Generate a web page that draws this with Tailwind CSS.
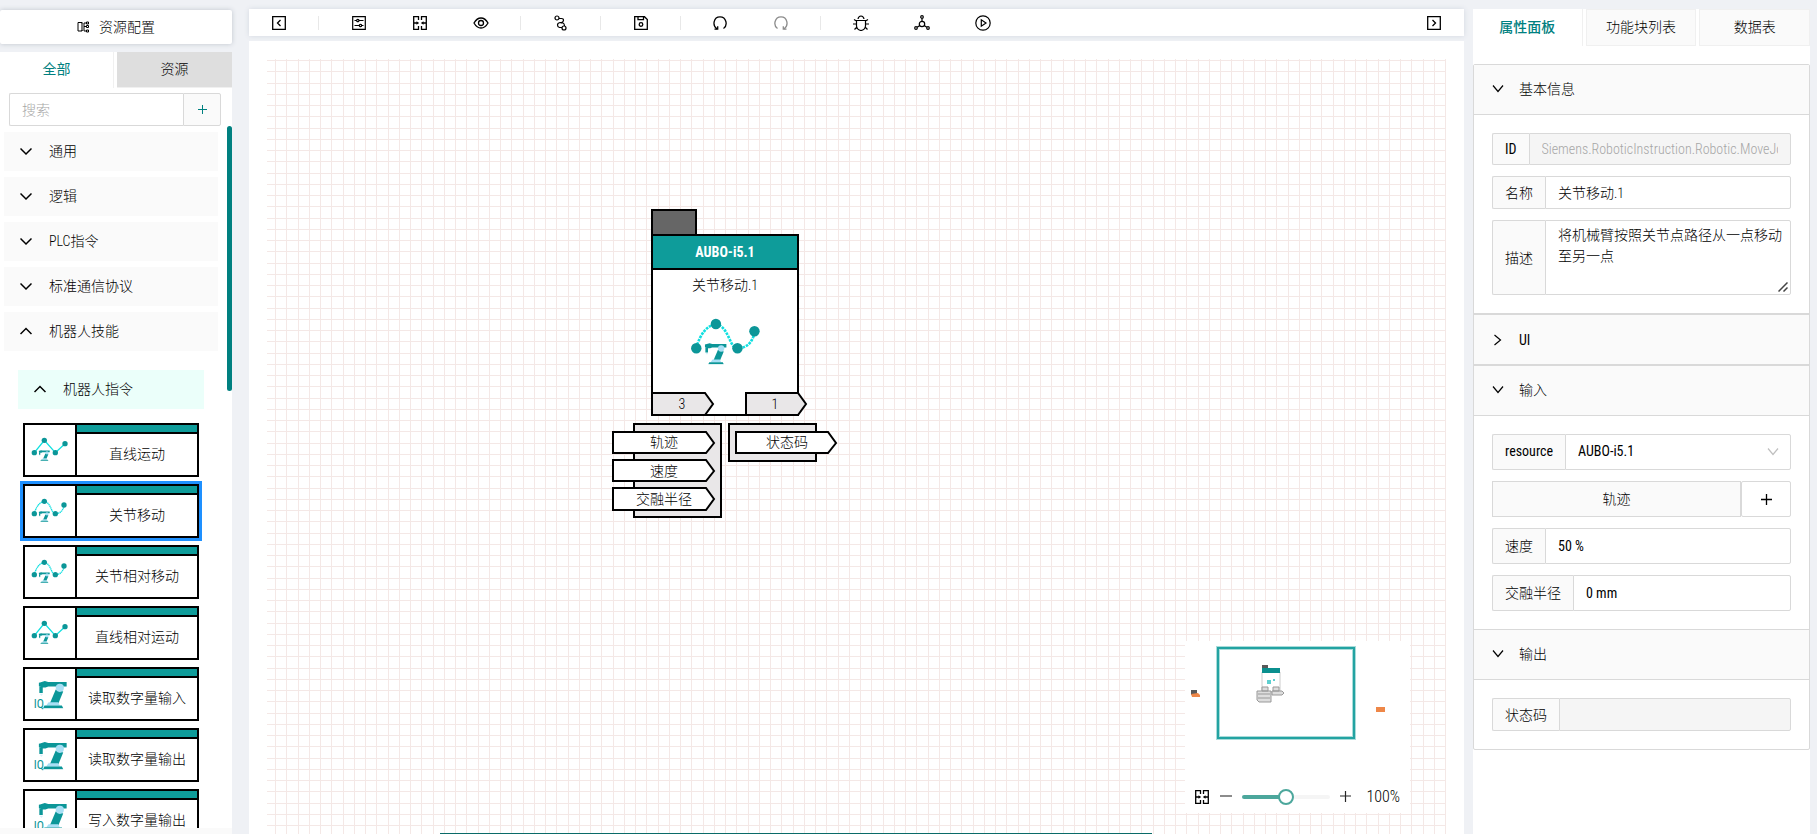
<!DOCTYPE html>
<html lang="zh-CN">

<head>
    <meta charset="UTF-8">
    <meta name="viewport" content="width=device-width, initial-scale=1.0">
    <script src="https://cdn.jsdelivr.net/npm/@tailwindcss/browser@4"></script>
    <title>资源配置</title>
</head>

<body class="bg-[#eff1f5] font-['Roboto_Condensed',Roboto,'Noto_Sans_CJK_SC',sans-serif] text-sm font-light text-black">
    <!-- Shared icons -->
    <svg class="hidden">
        <symbol id="down" viewBox="0 0 12 12"><path d="M1 2.500l5 6 5-6" fill="none" stroke="currentColor" stroke-width="1.200"/></symbol>
        <symbol id="fold" viewBox="0 0 12 12"><path d="M0.5 3.5L6 9l5.500-5.500" fill="none" stroke="currentColor" stroke-width="1.5"/></symbol>
        <symbol id="unfold" viewBox="0 0 12 12"><path d="M0.500 9L6 3.500 11.500 9" fill="none" stroke="currentColor" stroke-width="1.5"/></symbol>
        <symbol id="fit" viewBox="0 0 14 14">
            <path d="M5.500 4V.7H.7v12.600h4.800V10M8.500 4V.7h4.800v12.600H8.500V10M1 7h3M10 7h3" fill="none" stroke="currentColor" stroke-width="1.300"/>
            <path d="M3.500 5.200L6.200 7 3.500 8.800zM10.500 5.200L7.800 7l2.700 1.800z" fill="currentColor"/>
        </symbol>
        <symbol id="robot" viewBox="0 0 84 82">
            <path d="M4 5l14-4 10 3h54v13H28l-8 3H6v-4H0V6z" fill="#0b9698"/>
            <path d="M2 16h10v20H2z" fill="#0b9698"/>
            <path d="M3 38l10 0-5 7z" fill="#d5eefb"/>
            <path d="M50 26l22 6-14 34H33z" fill="#0b9698"/>
            <circle cx="62" cy="21" r="12" fill="#a8dff5"/>
            <path d="M29 63h28l5 10H22z" fill="#a8dff5"/>
            <path d="M17 73h51l4 8H13z" fill="#0b9698"/>
        </symbol>
        <symbol id="line-move" viewBox="0 0 150 150">
            <path d="M28 83L58 46l33 37 29-27" fill="none" stroke="#10e0df" stroke-width="4"/>
            <g fill="#0b9698"><circle cx="28" cy="83" r="8"/><circle cx="58" cy="46" r="8"/><circle cx="91" cy="83" r="8"/><circle cx="120" cy="56" r="8"/></g>
            <use href="#robot" x="41" y="75" width="34" height="33"/>
        </symbol>
        <symbol id="joint-move" viewBox="0 0 150 150">
            <path d="M28 83c6-24 18-35 30-37 20 3 22 40 33 37 17 0 24-12 27-27" fill="none" stroke="#10dfe0" stroke-width="4" stroke-dasharray="4 1.500"/>
            <g fill="#0b9698"><circle cx="28" cy="83" r="8"/><circle cx="58" cy="46" r="8"/><circle cx="91" cy="83" r="8"/><circle cx="117" cy="57" r="8"/></g>
            <use href="#robot" x="41" y="75" width="34" height="33"/>
        </symbol>
        <symbol id="io" viewBox="0 0 150 150">
            <use href="#robot" x="41" y="35" width="86" height="84"/>
            <text x="26" y="117" font-size="36" font-weight="400" fill="#0b9698">IQ</text>
        </symbol>
    </svg>

    <div class="flex h-screen overflow-hidden">
        <!-- Resource panel Start -->
        <aside class="flex w-[232px] shrink-0 flex-col pt-[10px]">
            <h1 class="mb-2 flex h-[34px] shrink-0 items-center justify-center gap-2.5 rounded-xs bg-white shadow-[0_0_5px_#bfc4cc]">
                <svg class="size-3" viewBox="0 0 12 12" fill="none" stroke="currentColor" stroke-width="1">
                    <path d="M5 2.500V1.500H1v8.500h4V9M5 1.500V10M7 2v8M7 5.500h3M7 2h2M7 10h2"/><path d="M9.500 1h2v2h-2zM9.500 4.500h2v2h-2zM9.500 9h2v2h-2z"/>
                </svg>资源配置
            </h1>
            <div class="flex min-h-0 flex-1 flex-col bg-white">
                <div class="flex h-9 shrink-0 gap-[3px]">
                    <button class="w-[114px] border-r border-[#f0f0f0] pb-0.5 font-normal text-[#008080]">全部</button>
                    <button class="flex-1 border-b border-[#f0f0f0] bg-[#dedede] pb-0.5">资源</button>
                </div>
                <div class="mt-[5px] mr-[11px] ml-[9px] flex h-[33px] shrink-0">
                    <input aria-label="搜索" placeholder="搜索" class="min-w-0 flex-1 rounded-l-xs border border-r-0 border-[#d9d9d9] px-3 outline-none placeholder:text-[#a6a6a6]">
                    <button aria-label="添加" class="flex w-[38px] items-center justify-center rounded-r-xs border border-[#d9d9d9] bg-[#fafafa] text-[#008080]">
                        <svg class="size-[9px]" viewBox="0 0 9 9"><path d="M0 4.500h9M4.500 0v9" stroke="currentColor"/></svg>
                    </button>
                </div>
                <div class="relative min-h-0 flex-1 overflow-hidden">
                    <div class="absolute top-0 right-0 h-[265px] w-[5px] rounded-full bg-[#008080]"></div>
                    <div class="mt-1.5 mr-[14px] ml-1 flex flex-col gap-1.5">
                        <button class="flex h-[39px] items-center gap-[17px] bg-[#fafafa] pb-0.5 pl-4"><svg class="size-3"><use href="#fold"/></svg>通用</button>
                        <button class="flex h-[39px] items-center gap-[17px] bg-[#fafafa] pb-0.5 pl-4"><svg class="size-3"><use href="#fold"/></svg>逻辑</button>
                        <button class="flex h-[39px] items-center gap-[17px] bg-[#fafafa] pb-0.5 pl-4"><svg class="size-3"><use href="#fold"/></svg>PLC指令</button>
                        <button class="flex h-[39px] items-center gap-[17px] bg-[#fafafa] pb-0.5 pl-4"><svg class="size-3"><use href="#fold"/></svg>标准通信协议</button>
                        <button class="flex h-[39px] items-center gap-[17px] bg-[#fafafa] pb-0.5 pl-4"><svg class="size-3"><use href="#unfold"/></svg>机器人技能</button>
                    </div>
                    <div class="mt-[19px] mr-7 ml-[18px]">
                        <button class="flex h-[39px] w-full items-center gap-[17px] bg-[#ebfffa] pb-0.5 pl-4"><svg class="size-3"><use href="#unfold"/></svg>机器人指令</button>
                    </div>
                    <ul class="mt-[14px] ml-[23px] flex w-44 flex-col gap-[7px]">
                        <li class="flex h-[54px] border-2 border-black bg-white">
                            <svg class="size-[50px]"><use href="#line-move"/></svg>
                            <div class="flex flex-1 flex-col border-l-2 border-black">
                                <div class="h-[9px] border-b-2 border-black bg-[#0e9c9a]"></div>
                                <span class="flex flex-1 items-center justify-center pb-0.5">直线运动</span>
                            </div>
                        </li>
                        <li class="flex h-[54px] border-2 border-black bg-white outline-3 outline-[#1e90ff]">
                            <svg class="size-[50px]"><use href="#joint-move"/></svg>
                            <div class="flex flex-1 flex-col border-l-2 border-black">
                                <div class="h-[9px] border-b-2 border-black bg-[#0e9c9a]"></div>
                                <span class="flex flex-1 items-center justify-center pb-0.5">关节移动</span>
                            </div>
                        </li>
                        <li class="flex h-[54px] border-2 border-black bg-white">
                            <svg class="size-[50px]"><use href="#joint-move"/></svg>
                            <div class="flex flex-1 flex-col border-l-2 border-black">
                                <div class="h-[9px] border-b-2 border-black bg-[#0e9c9a]"></div>
                                <span class="flex flex-1 items-center justify-center pb-0.5">关节相对移动</span>
                            </div>
                        </li>
                        <li class="flex h-[54px] border-2 border-black bg-white">
                            <svg class="size-[50px]"><use href="#line-move"/></svg>
                            <div class="flex flex-1 flex-col border-l-2 border-black">
                                <div class="h-[9px] border-b-2 border-black bg-[#0e9c9a]"></div>
                                <span class="flex flex-1 items-center justify-center pb-0.5">直线相对运动</span>
                            </div>
                        </li>
                        <li class="flex h-[54px] border-2 border-black bg-white">
                            <svg class="size-[50px]"><use href="#io"/></svg>
                            <div class="flex flex-1 flex-col border-l-2 border-black">
                                <div class="h-[9px] border-b-2 border-black bg-[#0e9c9a]"></div>
                                <span class="flex flex-1 items-center justify-center pb-0.5">读取数字量输入</span>
                            </div>
                        </li>
                        <li class="flex h-[54px] border-2 border-black bg-white">
                            <svg class="size-[50px]"><use href="#io"/></svg>
                            <div class="flex flex-1 flex-col border-l-2 border-black">
                                <div class="h-[9px] border-b-2 border-black bg-[#0e9c9a]"></div>
                                <span class="flex flex-1 items-center justify-center pb-0.5">读取数字量输出</span>
                            </div>
                        </li>
                        <li class="flex h-[54px] border-2 border-black bg-white">
                            <svg class="size-[50px]"><use href="#io"/></svg>
                            <div class="flex flex-1 flex-col border-l-2 border-black">
                                <div class="h-[9px] border-b-2 border-black bg-[#0e9c9a]"></div>
                                <span class="flex flex-1 items-center justify-center pb-0.5">写入数字量输出</span>
                            </div>
                        </li>
                    </ul>
                </div>
                <div class="h-1.5 shrink-0 bg-[#fafafa]"></div>
            </div>
        </aside>
        <!-- Resource panel End -->

        <!-- Main Start -->
        <main class="ml-[17px] flex min-w-0 flex-1 flex-col pt-[9px]">
            <nav class="mb-[5px] flex h-[27px] shrink-0 items-center bg-white shadow-[0_0_5px_#d3d8e0]">
                <button aria-label="收起左侧" class="flex w-[60px] justify-center">
                    <svg class="size-[14px]" viewBox="0 0 14 14" fill="none" stroke="currentColor" stroke-width="1.3"><path d="M.7.7h12.600v12.600H.7zM8.500 4L5.500 7l3 3"/></svg>
                </button>
                <div class="mx-[9px] h-[14px] w-px bg-[#e8e8e8]"></div>
                <button aria-label="设置" class="flex w-[61px] justify-center">
                    <svg class="size-[14px]" viewBox="0 0 14 14" fill="none" stroke="currentColor" stroke-width="1.2"><path d="M.7.7h12.600v12.600H.7zM2.500 4.500h2M7 4.500h4.500M2.500 9.500H7M10 9.500h1.500"/><circle cx="5.800" cy="4.500" r="1.200"/><circle cx="8.500" cy="9.500" r="1.200"/></svg>
                </button>
                <button aria-label="适应画布" class="flex w-[61px] justify-center"><svg class="size-[14px]"><use href="#fit"/></svg></button>
                <button aria-label="预览" class="flex w-[61px] justify-center">
                    <svg class="size-4" viewBox="0 0 16 16" fill="none" stroke="currentColor" stroke-width="1.3"><path d="M1 8c2-3.500 4.500-5 7-5s5 1.500 7 5c-2 3.500-4.500 5-7 5s-5-1.500-7-5z"/><circle cx="8" cy="8" r="2.500"/></svg>
                </button>
                <div class="mx-[9px] h-[14px] w-px bg-[#e8e8e8]"></div>
                <button aria-label="连线" class="flex w-[61px] justify-center">
                    <svg class="size-4" viewBox="0 0 16 16" fill="none" stroke="currentColor" stroke-width="1.200"><circle cx="4" cy="3" r="2"/><circle cx="11" cy="13" r="2"/><path d="M6 3.500h2.500q2 0 2 1.800T8.500 7.500H7Q4.500 8 4.500 10t2 2.500H9M7.500 8H10q1.500.5 1.500 3"/></svg>
                </button>
                <div class="mx-[9px] h-[14px] w-px bg-[#e8e8e8]"></div>
                <button aria-label="保存" class="flex w-[61px] justify-center">
                    <svg class="size-[14px]" viewBox="0 0 14 14" fill="none" stroke="currentColor" stroke-width="1.300"><path d="M.7.7h9.800l2.800 2.800v9.800H.7zM4 .7v3h5.500v-3"/><circle cx="7" cy="8.500" r="1.800"/></svg>
                </button>
                <div class="mx-[9px] h-[14px] w-px bg-[#e8e8e8]"></div>
                <button aria-label="撤销" class="flex w-[60px] justify-center">
                    <svg class="size-[14px]" viewBox="0 0 14 14" fill="none" stroke="currentColor" stroke-width="1.300"><path d="M4 13C-1 9.500.5.800 7 .800S15 9.500 10.500 12.500"/><path d="M1.500 13.200h3.200v-3"/></svg>
                </button>
                <button aria-label="重做" class="flex w-[61px] justify-center text-[#8c8c8c]">
                    <svg class="size-[14px]" viewBox="0 0 14 14" fill="none" stroke="currentColor" stroke-width="1.300"><path d="M10 13C15 9.500 13.500.800 7 .800S-1 9.500 3.500 12.500"/><path d="M12.500 13.200H9.300v-3"/></svg>
                </button>
                <div class="mx-[9px] h-[14px] w-px bg-[#e8e8e8]"></div>
                <button aria-label="调试" class="flex w-[61px] justify-center">
                    <svg class="size-4" viewBox="0 0 16 16" fill="none" stroke="currentColor" stroke-width="1.200"><path d="M3.500 5.500h9v5.500q-.5 4-4.500 4.500Q4 15 3.500 11zM5 4q.5-3 3-3t3 3M3.500 6L1 4.500M12.500 6L15 4.500M3.500 9H0M12.500 9H16M4 12l-2.500 2.500M12 12l2.500 2.500"/></svg>
                </button>
                <button aria-label="部署" class="flex w-[61px] justify-center">
                    <svg class="size-4" viewBox="0 0 16 16" fill="none" stroke="currentColor" stroke-width="1.200"><circle cx="8" cy="9" r="2.700"/><circle cx="8" cy="2" r="1.300"/><circle cx="2" cy="13" r="1.300"/><circle cx="14" cy="13" r="1.300"/><path d="M8 3.500v2.800M5.800 10.500L3.200 12.300M10.200 10.500l2.600 1.800"/></svg>
                </button>
                <button aria-label="运行" class="flex w-[61px] justify-center">
                    <svg class="size-4" viewBox="0 0 16 16" fill="none" stroke="currentColor" stroke-width="1.200"><circle cx="8" cy="8" r="7.200"/><path d="M6.300 4.800v6.400L11 8z"/></svg>
                </button>
                <button aria-label="收起右侧" class="ml-auto flex w-[61px] justify-center">
                    <svg class="size-[14px]" viewBox="0 0 14 14" fill="none" stroke="currentColor" stroke-width="1.300"><path d="M.7.7h12.600v12.600H.7zM5.500 4l3 3-3 3"/></svg>
                </button>
            </nav>

            <!-- Canvas -->
            <section class="relative min-h-0 flex-1 bg-white px-[18px] pt-[18px]">
                <svg class="size-full">
                    <defs>
                        <pattern id="grid" x="8" y="1" width="45" height="45" patternUnits="userSpaceOnUse">
                            <path d="M0 0h1v45H0zM11 0h1v45h-1zM23 0h1v45h-1zM34 0h1v45h-1zM0 0h45v1H0zM0 11h45v1H0zM0 23h45v1H0zM0 34h45v1H0z" fill="#f4e8e6"/>
                        </pattern>
                    </defs>
                    <rect width="100%" height="100%" fill="url(#grid)"/>
                </svg>

                <!-- Function block -->
                <svg class="absolute top-[159px] left-[351px] h-[330px] w-[250px]" viewBox="0 0 250 330" stroke="#000" stroke-width="2" text-anchor="middle">
                    <path d="M52 10h44v25H52z" fill="#666"/>
                    <path d="M52 35h146v180H52z" fill="#fff"/>
                    <path d="M52 35h146v34H52z" fill="#0e9c9a"/>
                    <path d="M52 193h53l8 11-8 11H52zM146 193h52l8 11-8 11h-52z" fill="#e9e7e8"/>
                    <path d="M34 224h87v93H34zM129 224h87v37h-87z" fill="#e9e7e8"/>
                    <path d="M13 232h93l8 11-8 10H13zM13 260h93l8 11-8 10H13zM13 288h93l8 11-8 11H13zM136 232h92l8 11-8 10h-92z" fill="#fff"/>
                    <use href="#joint-move" x="78" y="94" width="98" height="98" stroke="none"/>
                    <g stroke="none" font-size="14">
                        <text x="125" y="57" fill="#fff" font-weight="bold">AUBO-i5.1</text>
                        <text x="125" y="90">关节移动.1</text>
                        <text x="82" y="209">3</text>
                        <text x="175" y="209">1</text>
                        <text x="64" y="247">轨迹</text>
                        <text x="64" y="276">速度</text>
                        <text x="64" y="304">交融半径</text>
                        <text x="187" y="247">状态码</text>
                    </g>
                </svg>

                <!-- Minimap -->
                <div class="absolute right-[54px] bottom-[21px] flex h-[172px] w-[225px] flex-col bg-white">
                    <svg class="w-full flex-1" viewBox="0 0 225 140">
                        <path d="M33 7h136v90H33z" fill="none" stroke="#a9dcda" stroke-width="4"/>
                        <path d="M33 7h136v90H33z" fill="none" stroke="#23a3a2" stroke-width="2"/>
                        <path d="M6 49h6v5H6zM77 24h6v4h-6z" fill="#595959"/>
                        <path d="M6 53l7-1 2 2v2H7zM191 66h9v5h-9z" fill="#ee8748"/>
                        <path d="M77 31h18v20H77z" fill="#fff" stroke="#ccc"/>
                        <path d="M77 27h18v5H77z" fill="#0b8f8e"/>
                        <path d="M82 39h4v4h-4zM88 38h2v2h-2z" fill="#5fd0d0"/>
                        <path d="M77 46h6v4h-6zM88 46h6v4h-6zM72 50h14v11H74l-2-2zM87 50h10l2 2-2 2H87z" fill="#ddd" stroke="#999"/>
                        <path d="M73 53h12M73 57h12" stroke="#999"/>
                    </svg>
                    <div class="flex h-8 items-center px-[10px]">
                        <button aria-label="适应画布"><svg class="size-[14px]"><use href="#fit"/></svg></button>
                        <button aria-label="缩小" class="ml-[11px]"><svg class="size-3" viewBox="0 0 12 12"><path d="M0 5h12" stroke="#666" stroke-width="1.500"/></svg></button>
                        <input type="range" aria-label="缩放" min="0" max="200" value="100" class="mx-[10px] h-1 w-[88px] appearance-none rounded-full bg-[linear-gradient(to_right,#4ca79c_50%,#f5f5f5_50%)] [&::-webkit-slider-thumb]:size-4 [&::-webkit-slider-thumb]:appearance-none [&::-webkit-slider-thumb]:rounded-full [&::-webkit-slider-thumb]:border-2 [&::-webkit-slider-thumb]:border-[#4ca79c] [&::-webkit-slider-thumb]:bg-white">
                        <button aria-label="放大"><svg class="size-3" viewBox="0 0 12 12"><path d="M0 5h11M5.500 0v11" stroke="#262626" stroke-width="1.200"/></svg></button>
                        <span class="ml-auto text-base">100%</span>
                    </div>
                </div>

                <!-- Horizontal scrollbar -->
                <div class="absolute bottom-0 left-[191px] h-px w-[712px] bg-[#0a6b68]"></div>
            </section>
        </main>
        <!-- Main End -->

        <!-- Property panel Start -->
        <aside class="mt-[9px] mr-[7px] ml-[9px] w-[337px] shrink-0 bg-white">
            <div class="mb-[18px] flex h-[37px] gap-[3px]">
                <button class="flex-1 border-r border-[#f0f0f0] pb-0.5 font-medium text-[#008080]">属性面板</button>
                <button class="flex-1 border border-[#f0f0f0] bg-[#fafafa] pb-0.5">功能块列表</button>
                <button class="flex-1 border border-[#f0f0f0] bg-[#fafafa] pb-0.5">数据表</button>
            </div>

            <div class="rounded-xs border border-[#d9d9d9]">
                <button class="flex h-[49px] w-full items-center gap-[15px] bg-[#fafafa] pb-0.5 pl-[18px]"><svg class="size-3"><use href="#down"/></svg>基本信息</button>
                <div class="flex flex-col gap-[11px] border-t border-[#d9d9d9] p-[18px]">
                    <div class="flex h-8">
                        <label for="block-id" class="flex items-center rounded-l-xs border border-r-0 border-[#d9d9d9] bg-[#fafafa] px-3 font-normal">ID</label>
                        <input id="block-id" disabled value="Siemens.RoboticInstruction.Robotic.MoveJoint" class="min-w-0 flex-1 rounded-r-xs border border-[#d9d9d9] bg-[#f5f5f5] px-3 text-[#a6a6a6]">
                    </div>
                    <div class="flex h-[33px]">
                        <label for="block-name" class="flex items-center rounded-l-xs border border-r-0 border-[#d9d9d9] bg-[#fafafa] px-3">名称</label>
                        <input id="block-name" value="关节移动.1" class="min-w-0 flex-1 rounded-r-xs border border-[#d9d9d9] px-3">
                    </div>
                    <div class="flex h-[75px]">
                        <label for="block-desc" class="flex items-center rounded-l-xs border border-r-0 border-[#d9d9d9] bg-[#fafafa] px-3">描述</label>
                        <div class="relative min-w-0 flex-1">
                            <textarea id="block-desc" class="size-full resize-none rounded-r-xs border border-[#d9d9d9] py-1 pr-1 pl-3 leading-[21px]">将机械臂按照关节点路径从一点移动至另一点</textarea>
                            <svg class="pointer-events-none absolute right-[3px] bottom-[3px] size-[10px]" viewBox="0 0 10 10"><path d="M.5 9.500l9-9M5.500 9.500l4-4" stroke="#444" stroke-width="1.500"/></svg>
                        </div>
                    </div>
                </div>

                <button class="flex h-[51px] w-full items-center gap-[15px] border-t-2 border-[#d9d9d9] bg-[#fafafa] pl-[18px] font-normal"><svg class="size-3 -rotate-90"><use href="#down"/></svg>UI</button>

                <button class="flex h-[51px] w-full items-center gap-[15px] border-t-2 border-[#d9d9d9] bg-[#fafafa] pb-0.5 pl-[18px]"><svg class="size-3"><use href="#down"/></svg>输入</button>
                <div class="flex flex-col gap-[11px] border-y border-[#d9d9d9] p-[18px]">
                    <div class="flex h-9">
                        <label for="resource" class="flex items-center rounded-l-xs border border-r-0 border-[#d9d9d9] bg-[#fafafa] px-3 pb-0.5 font-normal">resource</label>
                        <div class="relative min-w-0 flex-1">
                            <select id="resource" class="size-full appearance-none rounded-r-xs border border-[#d9d9d9] px-3 pb-0.5 font-normal">
                                <option>AUBO-i5.1</option>
                            </select>
                            <svg class="pointer-events-none absolute top-3 right-3 size-3 text-[#bfbfbf]"><use href="#down"/></svg>
                        </div>
                    </div>
                    <div class="flex h-9">
                        <button class="flex-1 border border-[#d9d9d9] bg-[#fafafa]">轨迹</button>
                        <button aria-label="添加轨迹" class="flex w-[50px] items-center justify-center rounded-xs border border-[#d9d9d9]"><svg class="size-[11px]" viewBox="0 0 11 11"><path d="M0 5.500h11M5.500 0v11" stroke="#000" stroke-width="1.300"/></svg></button>
                    </div>
                    <div class="flex h-9">
                        <label for="speed" class="flex items-center rounded-l-xs border border-r-0 border-[#d9d9d9] bg-[#fafafa] px-3">速度</label>
                        <input id="speed" value="50 %" class="min-w-0 flex-1 rounded-r-xs border border-[#d9d9d9] px-3 font-normal">
                    </div>
                    <div class="flex h-9">
                        <label for="blend" class="flex items-center rounded-l-xs border border-r-0 border-[#d9d9d9] bg-[#fafafa] px-3">交融半径</label>
                        <input id="blend" value="0 mm" class="min-w-0 flex-1 rounded-r-xs border border-[#d9d9d9] px-3 font-normal">
                    </div>
                </div>

                <button class="flex h-[49px] w-full items-center gap-[15px] bg-[#fafafa] pb-0.5 pl-[18px]"><svg class="size-3"><use href="#down"/></svg>输出</button>
                <div class="border-t border-[#d9d9d9] p-[18px]">
                    <div class="flex h-[33px]">
                        <label for="status" class="flex items-center rounded-l-xs border border-r-0 border-[#d9d9d9] bg-[#fafafa] px-3">状态码</label>
                        <input id="status" disabled class="min-w-0 flex-1 rounded-r-xs border border-[#d9d9d9] bg-[#f5f5f5] px-3">
                    </div>
                </div>
            </div>
        </aside>
        <!-- Property panel End -->
    </div>
</body>

</html>
